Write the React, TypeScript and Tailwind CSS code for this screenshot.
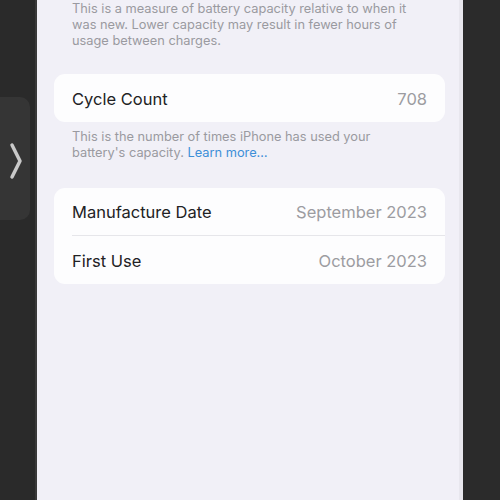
import React from "react";

export default function App() {
  const font = { fontFamily: "Inter, 'Noto Sans', sans-serif" };
  return (
    <div className="flex h-[500px] w-[500px] overflow-hidden bg-[#2a2a2a]" style={font}>
      <div className="w-[35px] shrink-0 bg-[#2a2a2a] pt-[97px]">
        <div className="flex h-[123px] w-[30px] items-center justify-center rounded-r-[10px] bg-[#353535]">
          <svg width="14" height="38" viewBox="0 0 14 38" className="ml-[2px] mt-[4px]">
            <path d="M3 3 L11 19 L3 35" fill="none" stroke="#c9c9c9" strokeWidth="3.5" strokeLinecap="round" strokeLinejoin="round" />
          </svg>
        </div>
      </div>
      <div className="w-[2px] shrink-0 bg-[#3a3a3a]" />
      <div className="flex w-[422px] shrink-0 flex-col bg-[#f1f0f7] pl-[17px] pr-[14px] pt-[1px]">
        <p className="px-[18px] text-[12.8px] leading-[16px] text-[#9a9aa0]">
          This is a measure of battery capacity relative to when it was new. Lower capacity may result in fewer hours of usage between charges.
        </p>
        <div className="mt-[25px] flex h-[48px] items-center justify-between rounded-[11px] bg-[#fdfdfe] px-[18px] pt-[2px] text-[16.5px]">
          <span className="text-[#222224]">Cycle Count</span>
          <span className="text-[#9c9ca1]">708</span>
        </div>
        <p className="mt-[7px] px-[18px] text-[12.8px] leading-[16px] text-[#9a9aa0]">
          This is the number of times iPhone has used your battery's capacity. <span className="text-[#3d8fd8]">Learn more…</span>
        </p>
        <div className="mt-[27px] flex flex-col rounded-[11px] bg-[#fdfdfe] pl-[18px] text-[16.5px]">
          <div className="flex h-[48px] items-center justify-between border-b border-[#e6e6ea] pr-[18px] pt-[2px]">
            <span className="text-[#222224]">Manufacture Date</span>
            <span className="text-[#9c9ca1]">September 2023</span>
          </div>
          <div className="flex h-[48px] items-center justify-between pr-[18px] pt-[2px]">
            <span className="text-[#222224]">First Use</span>
            <span className="text-[#9c9ca1]">October 2023</span>
          </div>
        </div>
      </div>
      <div className="w-[4px] shrink-0 bg-[#e8e7ee]" />
      <div className="flex-1 bg-[#2b2b2b]" />
    </div>
  );
}
